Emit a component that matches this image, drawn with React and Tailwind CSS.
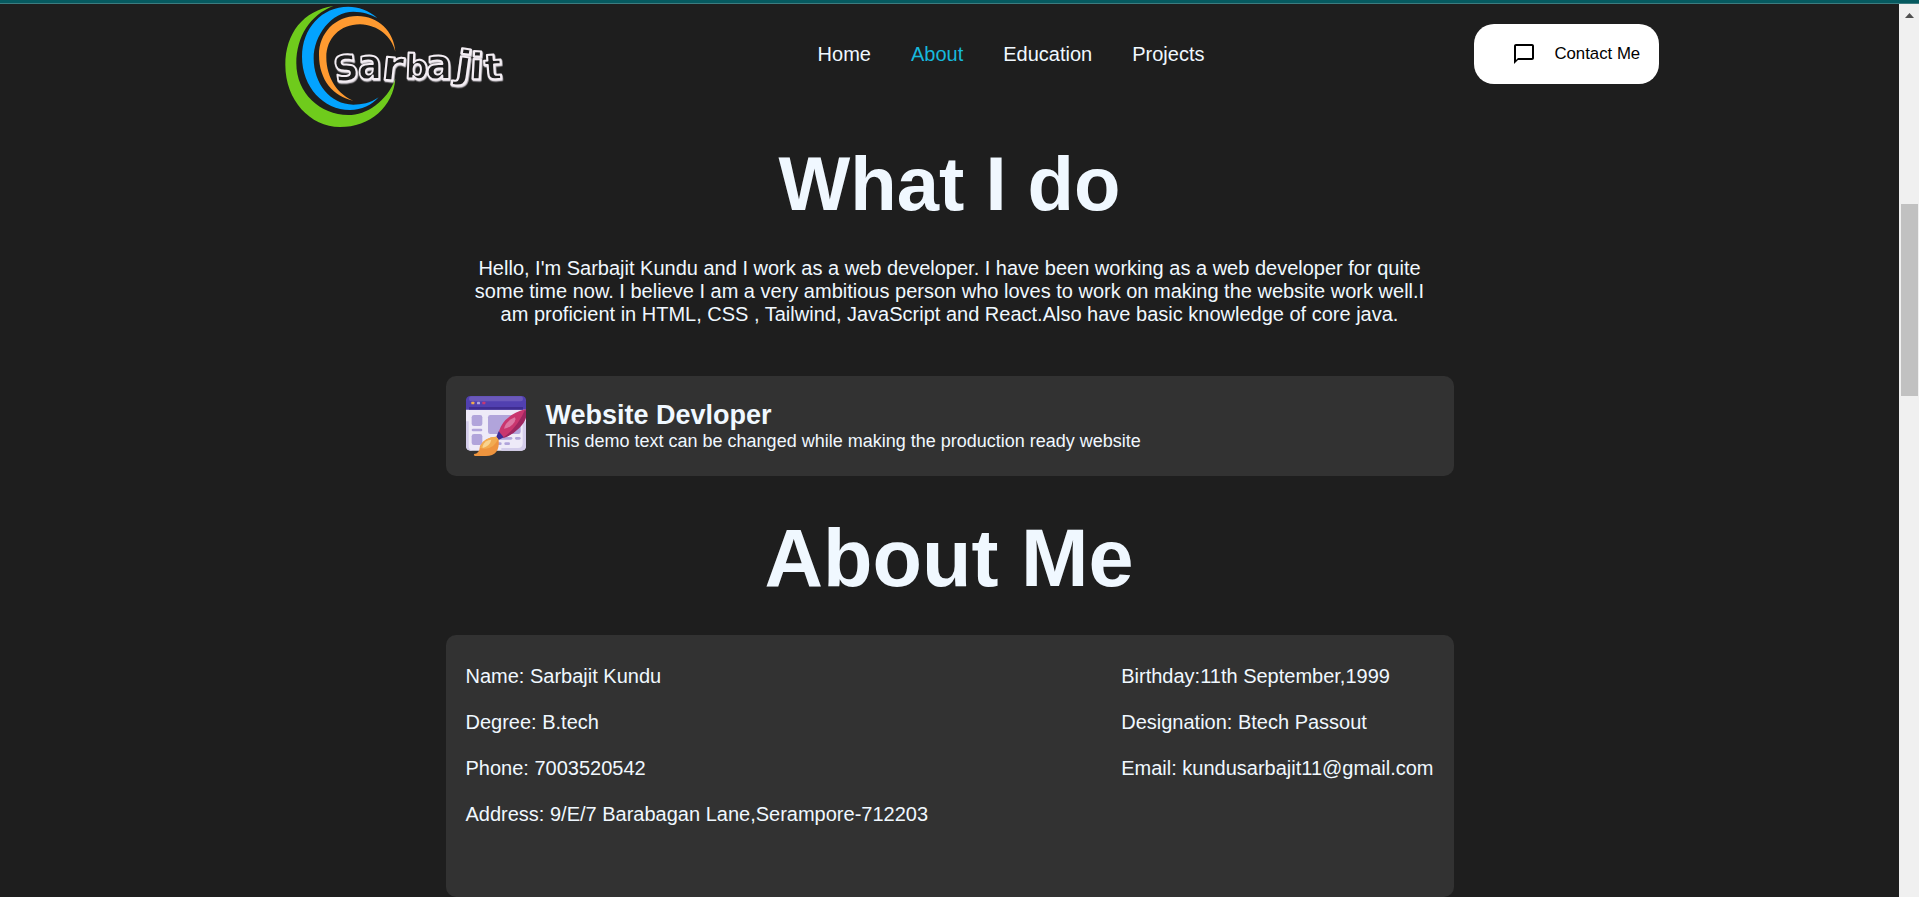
import React from "react";

const NAV = ["Home", "About", "Education", "Projects"];

const LETTERS = [
  { c: "s", x: 198, y: 247, r: -8, s: 142, w: 0.84 },
  { c: "a", x: 264, y: 237, r: 0, s: 130, w: 0.82 },
  { c: "r", x: 333, y: 238, r: 6, s: 126, w: 1.05 },
  { c: "b", x: 405, y: 235, r: 2, s: 102, w: 0.94 },
  { c: "a", x: 468, y: 237, r: 0, s: 130, w: 0.9 },
  { c: "j", x: 553, y: 230, r: 8, s: 116, w: 1.25 },
  { c: "i", x: 598, y: 236, r: 3, s: 110, w: 1.1 },
  { c: "t", x: 645, y: 240, r: -4, s: 106, w: 1.05 },
];

function Logo() {
  return (
    <svg viewBox="0 12 750 420" className="h-[140px] w-[250px] shrink-0" aria-label="sarbajit">
      <path fill="#6fcb1c" d="M190 18C100 32 46 100 46 195C46 300 120 381 210 381C300 381 370 320 376 236C350 305 290 345 235 345C150 345 79 280 79 190C79 110 120 45 190 18Z" />
      <path fill="#03a3ff" d="M322 54C295 30 265 20 235 20C155 20 96 85 96 170C96 260 160 330 240 330C275 330 305 315 326 292C300 310 275 314 250 314C180 314 131 250 131 175C131 105 185 35 250 35C280 36 300 42 322 54Z" />
      <path fill="#ff9a30" d="M376 155C372 95 325 48 262 48C195 48 147 100 147 165C147 240 190 290 250 302C205 285 169 235 169 172C169 115 210 73 270 73C325 75 365 110 376 155Z" />
      <g
        fill="#1e1e1e"
        stroke="#f4eef4"
        strokeWidth="6"
        strokeLinejoin="round"
        className="font-[DejaVu_Sans,sans-serif] font-bold [filter:drop-shadow(2px_4px_0_#d9d4da)]"
      >
        {LETTERS.map((l, i) => (
          <text key={i} fontSize={l.s} transform={`translate(${l.x} ${l.y}) rotate(${l.r}) scale(${l.w} 1)`}>
            {l.c}
          </text>
        ))}
      </g>
    </svg>
  );
}

function DesignIcon() {
  return (
    <svg viewBox="0 0 180 180" className="size-[60px] shrink-0">
      <rect y="4" width="180" height="160" rx="14" fill="#eeeaf8" />
      <path d="M0 76h8v74q0 12 12 14h-6Q0 164 0 150ZM180 76v74q0 14-14 14h-60v-8h50q14 0 14-14V76Z" fill="#d4cdeb" />
      <path d="M0 41V14Q0 0 14 0H166Q180 0 180 14V41Z" fill="#5140b0" />
      <rect x="9" y="1" width="162" height="15" rx="7" fill="#6b59ba" />
      <rect x="9" y="33" width="162" height="8" fill="#3f2d91" />
      <rect x="16" y="17" width="9" height="8" rx="2" fill="#f2aa4c" />
      <rect x="33" y="17" width="9" height="8" rx="2" fill="#b3a6de" />
      <rect x="49" y="17" width="9" height="8" rx="2" fill="#c63774" />
      <g fill="#b1a4db">
        <rect x="17" y="57" width="32" height="33" rx="7" />
        <rect x="17" y="98" width="32" height="8" rx="4" />
        <rect x="17" y="114" width="32" height="33" rx="7" />
        <rect x="66" y="57" width="98" height="57" rx="7" />
        <rect x="100" y="123" width="39" height="8" rx="4" />
        <rect x="147" y="123" width="17" height="8" rx="4" />
        <rect x="88" y="139" width="19" height="8" rx="4" />
        <rect x="115" y="139" width="17" height="8" rx="4" />
      </g>
      <path d="M98 108Q112 58 178 40Q186 64 158 94Q136 120 110 126Z" fill="#c9366f" />
      <path d="M110 126Q154 96 178 40Q190 66 160 96Q136 120 110 126Z" fill="#9e2660" />
      <path d="M114 98Q118 76 146 64Q153 71 139 86Q126 98 114 98Z" fill="#dc76a3" />
      <path d="M91 122L98 106L113 124L98 132Z" fill="#3d2b94" />
      <path d="M24 174Q40 174 42 150Q54 124 91 122L98 132Q102 180 60 180H27Q22 178 24 174Z" fill="#ee943e" />
      <path d="M42 156Q50 124 91 122L96 130Q80 166 42 156Z" fill="#f2ab50" />
      <path d="M50 150Q56 132 76 131Q72 150 50 156Z" fill="#f8d490" />
    </svg>
  );
}

function Scrollbar() {
  return (
    <div className="flex w-5 shrink-0 flex-col items-center bg-[#f0f0f0]">
      <div className="flex h-[200px] w-full justify-center pt-[9px]">
        <svg viewBox="0 0 9 5" className="h-[5px] w-[9px]">
          <path d="M0 5L4.5 0L9 5Z" fill="#505050" />
        </svg>
      </div>
      <div className="h-48 w-[17px] bg-[#c1c1c1]" />
    </div>
  );
}

function Header() {
  return (
    <header className="flex h-[100px] items-start">
      <div className="w-[547px] pl-[270px]">
        <Logo />
      </div>
      <nav className="ml-[270.6px] flex gap-10 pt-[39px] text-[20px] leading-[23px]">
        {NAV.map((n) => (
          <a key={n} className={n === "About" ? "text-[#17b8dc]" : ""}>
            {n}
          </a>
        ))}
      </nav>
      <button className="mt-5 mr-60 ml-auto flex h-[60px] w-[185px] items-center rounded-[20px] bg-white pl-[38px] text-[16.8px] text-black">
        <svg viewBox="0 0 24 24" className="mr-[18.4px] size-6" fill="currentColor">
          <path d="M20 2H4c-1.1 0-2 .9-2 2v18l4-4h14c1.100 0 2-.9 2-2V4c0-1.100-.9-2-2-2zm0 14H6l-2 2V4h16v12z" />
        </svg>
        Contact Me
      </button>
    </header>
  );
}

export default function App() {
  return (
    <div className="flex h-[897px] flex-col overflow-hidden bg-[#1e1e1e] font-[Liberation_Sans,Arial,sans-serif] text-[#f0f8ff]">
      <div className="h-1 shrink-0 border-b border-[#3c7c80] bg-[#065a60]" />
      <div className="flex min-h-0 flex-1">
        <div className="min-w-0 flex-1">
          <Header />
          <main className="ml-[446px] w-[1008px]">
            <h1 className="mt-9 pr-px text-center text-[76px] leading-[88px] font-bold">What I do</h1>
            <p className="mt-[29px] pr-[21px] pl-5 text-center text-[20px] leading-[23px]">
              Hello, I'm Sarbajit Kundu and I work as a web developer. I have been working as a web developer for quite
              <br />
              some time now. I believe I am a very ambitious person who loves to work on making the website work well.I
              <br />
              am proficient in HTML, CSS , Tailwind, JavaScript and React.Also have basic knowledge of core java.
            </p>
            <section className="mt-[50px] flex h-[100px] items-start gap-[19.5px] rounded-[10px] bg-[#323232] p-5">
              <DesignIcon />
              <div className="pt-[3px]">
                <h2 className="text-[27px] leading-[32px] font-bold">Website Devloper</h2>
                <p className="text-[18px] leading-[21px]">
                  This demo text can be changed while making the production ready website
                </p>
              </div>
            </section>
            <h1 className="mt-[35px] pr-[2px] text-center text-[81px] leading-[94px] font-bold">About Me</h1>
            <section className="mt-[30px] flex h-[262px] justify-between rounded-[10px] bg-[#323232] px-[19.5px] pt-[30px] pr-[20.5px] text-[20px] leading-[23px]">
              <div className="flex flex-col gap-[23px]">
                <p>Name: Sarbajit Kundu</p>
                <p>Degree: B.tech</p>
                <p>Phone: 7003520542</p>
                <p>Address: 9/E/7 Barabagan Lane,Serampore-712203</p>
              </div>
              <div className="flex flex-col gap-[23px]">
                <p>Birthday:11th September,1999</p>
                <p>Designation: Btech Passout</p>
                <p>Email: kundusarbajit11@gmail.com</p>
              </div>
            </section>
          </main>
        </div>
        <Scrollbar />
      </div>
    </div>
  );
}
